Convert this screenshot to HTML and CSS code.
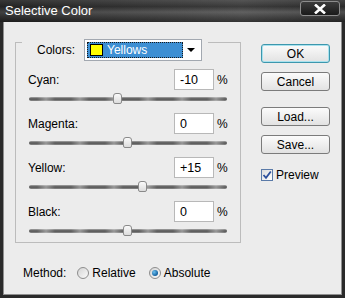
FILE: index.html
```html
<!DOCTYPE html>
<html lang="en">
<head>
  <meta charset="UTF-8">
  <title>Selective Color</title>
  <link rel="stylesheet" href="styles.css">
</head>
<body>

<div class="window">
  <div class="titlebar">
    <span class="title">Selective Color</span>
    <div class="close">
      <svg width="14" height="10" viewBox="0 0 14 10"><path d="M2 0.5 L12 9.5 M12 0.5 L2 9.5" stroke="#fff" stroke-width="2.6"/></svg>
    </div>
  </div>

  <div class="content">
    <div class="main">
      <div class="group">
        <div class="legend">
          <span>Colors:</span>
          <div class="select">
            <div class="selected"><span class="swatch"></span>Yellows</div>
            <div class="arrow"></div>
          </div>
        </div>

        <div class="row">
          <div class="line">
            <span>Cyan:</span>
            <div class="value"><div class="field">-10</div><span class="pct">%</span></div>
          </div>
          <div class="slider"><div class="track"><div class="thumb" style="left: 45%"></div></div></div>
        </div>

        <div class="row">
          <div class="line">
            <span>Magenta:</span>
            <div class="value"><div class="field">0</div><span class="pct">%</span></div>
          </div>
          <div class="slider"><div class="track"><div class="thumb" style="left: 50%"></div></div></div>
        </div>

        <div class="row">
          <div class="line">
            <span>Yellow:</span>
            <div class="value"><div class="field">+15</div><span class="pct">%</span></div>
          </div>
          <div class="slider"><div class="track"><div class="thumb" style="left: 57.5%"></div></div></div>
        </div>

        <div class="row">
          <div class="line">
            <span>Black:</span>
            <div class="value"><div class="field">0</div><span class="pct">%</span></div>
          </div>
          <div class="slider"><div class="track"><div class="thumb" style="left: 50%"></div></div></div>
        </div>
      </div>

      <div class="method">
        <span class="method-label">Method:</span>
        <span class="radio"></span><span>Relative</span>
        <span class="radio checked"></span><span>Absolute</span>
      </div>
    </div>

    <div class="side">
      <div class="btn default">OK</div>
      <div class="btn">Cancel</div>
      <div class="btn load">Load...</div>
      <div class="btn">Save...</div>
      <div class="check">
        <span class="box">
          <svg width="10" height="10" viewBox="0 0 10 10"><path d="M1.5 5 L4 7.8 L8.8 1.5" fill="none" stroke="#2c4f9c" stroke-width="1.8"/></svg>
        </span>
        <span>Preview</span>
      </div>
    </div>
  </div>
</div>

</body>
</html>
```

FILE: styles.css
```css
html, body {
  margin: 0;
  padding: 0;
}

body {
  font-family: "Liberation Sans", Arial, sans-serif;
  font-size: 12px;
  color: #000;
  background-color: #2a2a2a;
}

.window {
  width: 345px;
  height: 298px;
  display: flex;
  flex-direction: column;
  box-sizing: border-box;
  background-color: #2a2a2a;
}

/* Barra de título */
.titlebar {
  height: 22px;
  flex: none;
  display: flex;
  align-items: flex-start;
  justify-content: space-between;
  background: linear-gradient(90deg, rgba(0,0,0,0.25), rgba(255,255,255,0.06) 70%, rgba(0,0,0,0.1)),
              linear-gradient(to bottom, #4a4a4a 0%, #2f2f2f 30%, #575757 55%, #3a3a3a 80%, #262626 100%);
}

.title {
  color: #fff;
  font-size: 13px;
  margin: 3px 0 0 5px;
}

.close {
  width: 38px;
  height: 13px;
  margin: 1px 5px 0 0;
  border: 1px solid #8c8c8c;
  border-radius: 3px;
  background: linear-gradient(to bottom, #3c3c3c, #1a1a1a);
  display: flex;
  align-items: center;
  justify-content: center;
}

.content {
  flex: 1;
  display: flex;
  margin: 0 3px 3px 3px;
  border: 1px solid #8f8f8f;
  border-top: none;
  background-color: #ececec;
}

.main {
  width: 237px;
}

/* Grupo */
.group {
  width: 226px;
  margin: 20px 0 0 11px;
  padding: 0 12px 4px 12px;
  box-sizing: border-box;
  border: 1px solid #bcbcbc;
}

.legend {
  display: inline-flex;
  align-items: center;
  margin: -10px 0 0 -6px;
  padding: 0 6px 0 15px;
  height: 22px;
  background-color: #ececec;
}

.legend > span {
  margin-right: 9px;
}

.select {
  width: 118px;
  height: 22px;
  box-sizing: border-box;
  border: 1px solid #a2a8b0;
  background-color: #fff;
  display: flex;
  align-items: center;
  padding: 0 2px;
}

.selected {
  width: 96px;
  height: 16px;
  box-sizing: border-box;
  border: 1px dotted #1a1a1a;
  background-color: #3d8fd3;
  color: #fff;
  display: flex;
  align-items: center;
  padding-left: 2px;
}

.swatch {
  width: 13px;
  height: 12px;
  box-sizing: border-box;
  border: 1px solid #000;
  background-color: #ffff00;
  margin-right: 4px;
}

.arrow {
  width: 0;
  height: 0;
  margin-left: 4px;
  border-left: 4px solid transparent;
  border-right: 4px solid transparent;
  border-top: 4px solid #000;
}

.row {
  margin-top: 7px;
}

.legend + .row {
  margin-top: 8px;
}

.line {
  height: 21px;
  display: flex;
  align-items: center;
  justify-content: space-between;
}

.value {
  display: flex;
  align-items: center;
}

.field {
  width: 40px;
  height: 21px;
  box-sizing: border-box;
  border: 1px solid #b8b8b8;
  background-color: #fff;
  padding: 3px 0 0 5px;
  font-size: 12.5px;
}

.pct {
  width: 11px;
  margin-left: 3px;
}

.slider {
  height: 16px;
  padding: 7px 1px 0 1px;
  box-sizing: border-box;
}

.track {
  position: relative;
  height: 4px;
  border-radius: 2px;
  background: repeating-linear-gradient(90deg, rgba(255,255,255,0) 0px, rgba(255,255,255,0) 8px, rgba(255,255,255,0.35) 17px, rgba(255,255,255,0) 26px, rgba(255,255,255,0) 34px),
              linear-gradient(to bottom, #a8a8a8, #505050 50%, #8c8c8c);
}

.thumb {
  position: absolute;
  top: -4px;
  width: 9px;
  height: 11px;
  margin-left: -5px;
  box-sizing: border-box;
  border: 1px solid #8a8a8a;
  border-radius: 3px 3px 2px 2px;
  background: linear-gradient(to bottom, #fafafa, #dcdcdc);
}

/* Método */
.method {
  display: flex;
  align-items: center;
  height: 16px;
  margin: 22px 0 0 19px;
}

.method-label {
  margin-right: 11px;
}

.radio {
  width: 12px;
  height: 12px;
  box-sizing: border-box;
  border: 1px solid #8d8d8d;
  border-radius: 50%;
  background: linear-gradient(135deg, #d4d4d4, #fbfbfb);
  margin-right: 3px;
  display: flex;
  align-items: center;
  justify-content: center;
}

.radio + span {
  margin-right: 13px;
}

.radio.checked::after {
  content: "";
  width: 6px;
  height: 6px;
  border-radius: 50%;
  background: radial-gradient(circle at 35% 35%, #6cc0f0, #11609f 70%);
}

/* Botões */
.side {
  padding: 22px 0 0 20px;
  display: flex;
  flex-direction: column;
}

.btn {
  width: 69px;
  height: 19px;
  box-sizing: border-box;
  border: 1px solid #7b7b7b;
  border-radius: 3px;
  background: linear-gradient(to bottom, #fbfbfb, #e2e2e2);
  display: flex;
  align-items: center;
  justify-content: center;
  margin-bottom: 9px;
}

.btn.default {
  border-color: #3d97ad;
  box-shadow: inset 0 0 0 1px #a9e2ee;
}

.btn.load {
  margin-top: 7px;
}

.check {
  display: flex;
  align-items: center;
  margin-top: 5px;
}

.box {
  width: 12px;
  height: 12px;
  box-sizing: border-box;
  border: 1px solid #5a7aa8;
  background: linear-gradient(135deg, #dcdcdc, #fff);
  display: flex;
  align-items: center;
  justify-content: center;
  margin-right: 3px;
}
```
